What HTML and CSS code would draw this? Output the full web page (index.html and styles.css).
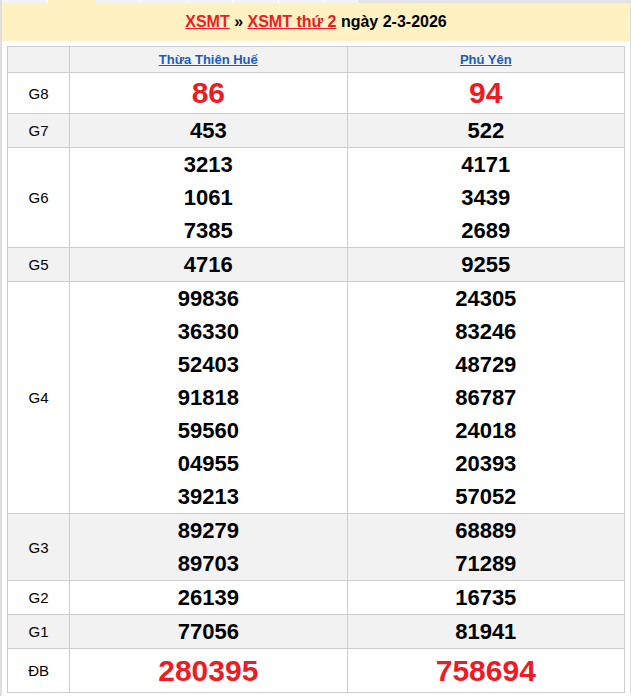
FILE: index.html
```html
<!DOCTYPE html>
<html lang="vi">
<head>
<meta charset="utf-8">
<title>XSMT thứ 2</title>
<link rel="stylesheet" href="styles.css">
</head>
<body>
<div class="page">
  <div class="tabs">
    <span class="tab"></span>
    <span class="tab tab-active"></span>
    <span class="tab"></span>
    <span class="tab"></span>
    <span class="tab"></span>
    <span class="tab"></span>
    <span class="tab"></span>
    <span class="tab tab-last"></span>
    <span class="tab-rest"></span>
  </div>
  <h2 class="title"><a href="#">XSMT</a> » <a href="#">XSMT thứ 2</a> ngày 2-3-2026</h2>
  <div class="body">
    <table class="kq">
      <colgroup><col class="c-label"><col class="c-prov"><col class="c-prov"></colgroup>
      <tr class="head">
        <th></th>
        <th><a href="#">Thừa Thiên Huế</a></th>
        <th><a href="#">Phú Yên</a></th>
      </tr>
      <tr class="g8">
        <td class="lbl">G8</td>
        <td><div class="big">86</div></td>
        <td><div class="big">94</div></td>
      </tr>
      <tr class="alt">
        <td class="lbl">G7</td>
        <td><div class="n">453</div></td>
        <td><div class="n">522</div></td>
      </tr>
      <tr>
        <td class="lbl">G6</td>
        <td><div class="n">3213</div><div class="n">1061</div><div class="n">7385</div></td>
        <td><div class="n">4171</div><div class="n">3439</div><div class="n">2689</div></td>
      </tr>
      <tr class="alt">
        <td class="lbl">G5</td>
        <td><div class="n">4716</div></td>
        <td><div class="n">9255</div></td>
      </tr>
      <tr>
        <td class="lbl">G4</td>
        <td><div class="n">99836</div><div class="n">36330</div><div class="n">52403</div><div class="n">91818</div><div class="n">59560</div><div class="n">04955</div><div class="n">39213</div></td>
        <td><div class="n">24305</div><div class="n">83246</div><div class="n">48729</div><div class="n">86787</div><div class="n">24018</div><div class="n">20393</div><div class="n">57052</div></td>
      </tr>
      <tr class="alt">
        <td class="lbl">G3</td>
        <td><div class="n">89279</div><div class="n">89703</div></td>
        <td><div class="n">68889</div><div class="n">71289</div></td>
      </tr>
      <tr>
        <td class="lbl">G2</td>
        <td><div class="n">26139</div></td>
        <td><div class="n">16735</div></td>
      </tr>
      <tr class="alt">
        <td class="lbl">G1</td>
        <td><div class="n">77056</div></td>
        <td><div class="n">81941</div></td>
      </tr>
      <tr class="db">
        <td class="lbl">ĐB</td>
        <td><div class="big">280395</div></td>
        <td><div class="big">758694</div></td>
      </tr>
    </table>
  </div>
</div>
</body>
</html>
```

FILE: styles.css
```css
html, body {
  margin: 0;
  padding: 0;
  background: #ffffff;
}
body {
  font-family: "Liberation Sans", Arial, sans-serif;
  color: #000;
}
.page {
  width: 628px;
  border-left: 2px solid #dedede;
  border-right: 1px solid #dedede;
  min-height: 696px;
}
.tabs {
  display: flex;
  height: 3px;
}
.tab {
  width: 45px;
  background: #f3f3f3;
  border-right: 1px solid #fafafa;
}
.tab-active {
  width: 46px;
  background: #fff1c1;
  border-right-color: #fff1c1;
}
.tab-last {
  width: 32px;
}
.tab-rest {
  flex: 1;
  background: #e4e4e4;
}
.title {
  margin: 0;
  background: #fff1c1;
  height: 38px;
  line-height: 37px;
  text-align: center;
  font-size: 16px;
  font-weight: bold;
  color: #000;
}
.title a {
  color: #ed1c24;
  text-decoration: underline;
}
.body {
  padding: 5px 5px 0 5px;
}
.kq {
  width: 618px;
  border-collapse: collapse;
  table-layout: fixed;
}
.c-label { width: 62px; }
.c-prov { width: 277px; }
.kq th, .kq td {
  border: 1px solid #cccccc;
  padding: 0;
  text-align: center;
  vertical-align: middle;
}
.kq .head th {
  background: #f2f2f2;
  height: 25px;
  font-size: 13px;
  font-weight: bold;
}
.kq .head a {
  color: #1a5db5;
  text-decoration: underline;
}
.kq .alt td {
  background: #f2f2f2;
}
.lbl {
  font-size: 15px;
  font-weight: normal;
}
.n {
  font-size: 22px;
  font-weight: bold;
  line-height: 33px;
}
.big {
  font-size: 30px;
  font-weight: bold;
  color: #ed1c24;
  line-height: 40px;
}
.db .big {
  line-height: 43px;
}
```
